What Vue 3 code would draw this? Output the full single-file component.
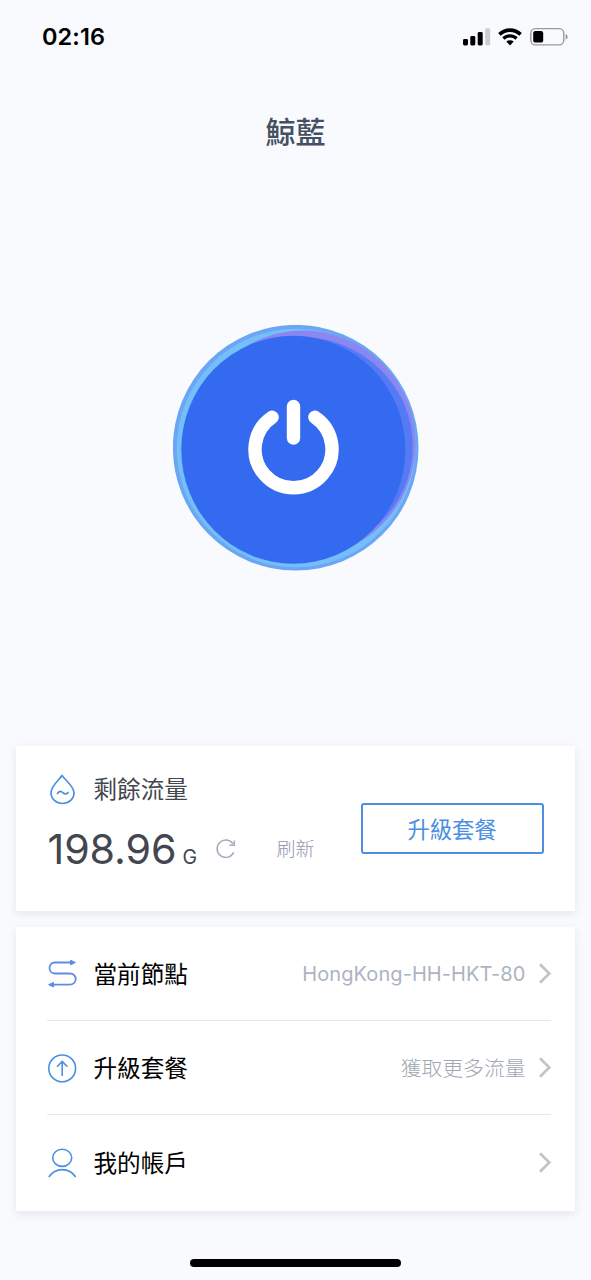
<script setup>
const rows = [
  { id: 'node', label: '當前節點', value: 'HongKong-HH-HKT-80', latin: true },
  { id: 'plan', label: '升級套餐', value: '獲取更多流量', latin: false },
  { id: 'account', label: '我的帳戶', value: '', latin: false }
]
</script>

<template>
  <main class="screen">
    <header class="status">
      <span class="time">02:16</span>
      <svg class="indicators" width="108" height="22" viewBox="0 0 108 22">
        <rect x="1" y="13" width="5" height="6.5" rx="1.4" />
        <rect x="8.3" y="10" width="5" height="9.5" rx="1.4" />
        <rect x="15.7" y="6" width="5" height="13.5" rx="1.4" />
        <rect x="23.2" y="2.3" width="5" height="17.2" rx="1.4" fill="#cccdd0" />
        <g fill="none" stroke="#000" stroke-width="3.6">
          <path d="M37.4 8.4a15.2 15.2 0 0 1 21.2 0" />
          <path d="M41.4 12.5a9.5 9.5 0 0 1 13.2 0" stroke-width="3.2" />
        </g>
        <path d="M44.3 15.6a5.5 5.5 0 0 1 7.4 0L48 19.4z" />
        <rect x="68.8" y="2.6" width="33" height="16.3" rx="4.6" fill="none" stroke="#98999c" stroke-width="1.4" />
        <rect x="71.2" y="5" width="10" height="11.6" rx="2.2" />
        <path d="M103.7 8v5.6c2.5-1 2.5-4.6 0-5.6z" fill="#8f9093" />
      </svg>
    </header>

    <h1 class="title">鯨藍</h1>

    <section class="power">
      <svg width="246" height="246" viewBox="0 0 246 246">
        <circle cx="122.7" cy="122.7" r="122.8" fill="#6ba5f4" />
        <ellipse cx="123" cy="123" rx="119.3" ry="119.3" fill="#74bff9" />
        <ellipse cx="130" cy="119" rx="112.3" ry="113.5" fill="#8b86f1" />
        <ellipse cx="127" cy="121" rx="112.8" ry="109" fill="#547af5" />
        <ellipse cx="120.3" cy="124.7" rx="112" ry="114" fill="#336af0" />
        <g fill="none" stroke="#fff" stroke-width="13.4" stroke-linecap="round">
          <path d="M99.1 92.3A38.5 38.5 0 1 0 141.9 92.3" />
          <path d="M120.5 81.5V113" />
        </g>
      </svg>
    </section>

    <section class="card usage">
      <div class="traffic">
        <div class="heading">
          <svg width="30" height="32" viewBox="0 0 30 32" fill="none" stroke="#4a8fe4" stroke-width="1.7" stroke-linecap="round" stroke-linejoin="round">
            <path d="M14 1.500C11.500 5.500 3 12 3 18.700C3 25 8.200 29.500 14.500 29.500S26 25 26 18.700C26 12 16.500 5.500 14 1.500Z" />
            <path d="M9.500 19.500C12 16 14 17.800 15.200 19C17 20.500 18.800 20 20 18.500" />
          </svg>
          <span>剩餘流量</span>
        </div>
        <div class="amount">
          <span class="number">198.96</span>
          <span class="unit">G</span>
          <svg class="refresh" width="22" height="22" viewBox="0 0 22 22" fill="none" stroke="#a3aabd" stroke-width="1.5">
            <path d="M18.700 14.400A8.700 8.700 0 1 1 18 5.800" />
            <path d="M19.300 2.500V7.300H14.500" />
          </svg>
          <span class="refresh-label">刷新</span>
        </div>
      </div>
      <button class="upgrade">升級套餐</button>
    </section>

    <nav class="card menu">
      <div v-for="row in rows" :key="row.id" class="row">
        <svg class="icon" width="30" height="32" viewBox="0 0 30 32" fill="none" stroke="#4a8fe4" stroke-width="1.6">
          <g v-if="row.id === 'node'" stroke="#5d8ce2" stroke-width="1.8">
            <path d="M23 4.500H7.700C0.800 4.500 0.800 15.500 7.700 15.500H22.500C30.800 15.500 30.800 26.700 22.500 26.700H6" />
            <path d="M23.500 2.200L28.400 4.500L23.500 6.800ZM6.500 24.400L1.600 26.700L6.500 29Z" fill="#5d8ce2" stroke-width="1" />
          </g>
          <g v-else-if="row.id === 'plan'">
            <circle cx="15.2" cy="16.4" r="13.4" />
            <path d="M15.200 23.900V9.600M10 14.700L15.200 9.400L20.400 14.700" />
          </g>
          <g v-else>
            <ellipse cx="15.2" cy="10.8" rx="9.5" ry="8.6" />
            <path d="M1.800 30C8.500 20.200 22 20.200 28.700 30" />
          </g>
        </svg>
        <span class="label">{{ row.label }}</span>
        <span class="value" :class="{ latin: row.latin }">{{ row.value }}</span>
        <svg class="chevron" width="14" height="22" viewBox="0 0 14 22" fill="none" stroke="#c3c4c6" stroke-width="2.7">
          <path d="M2 1.300L11.300 10.500L2 19.700" />
        </svg>
      </div>
    </nav>

    <footer class="home"><span></span></footer>
  </main>
</template>

<style>
body {
  margin: 0;
  background: #f9fafd;
}
</style>

<style scoped>
.screen {
  box-sizing: border-box;
  width: 591px;
  height: 1280px;
  padding: 0 16px;
  display: flex;
  flex-direction: column;
  background: #f9fafd;
  color: #000;
  font-family: Inter, "Noto Sans CJK TC", sans-serif;
  overflow: hidden;
}
.status {
  height: 74px;
  padding: 0 5px 0 26px;
  display: flex;
  align-items: center;
  justify-content: space-between;
}
.time {
  margin-bottom: 2px;
  font-size: 23.5px;
  font-weight: 600;
  letter-spacing: 0.1px;
}
.title {
  margin: 36px 0 0;
  height: 44px;
  line-height: 44px;
  text-align: center;
  font-size: 30px;
  font-weight: 500;
  color: #455063;
}
.power {
  height: 421px;
  margin-top: 170.5px;
  display: flex;
  justify-content: center;
}
.power svg,
.row svg,
.heading svg {
  flex: none;
}
.card {
  box-sizing: border-box;
  flex: none;
  background: #fff;
  border-radius: 1px;
  box-shadow: 0 3px 9px rgba(40, 60, 85, 0.1);
}
.usage {
  height: 165px;
  padding: 0 31.5px;
  display: flex;
  align-items: center;
  justify-content: space-between;
}
.traffic {
  height: 109px;
}
.heading {
  height: 32px;
  display: flex;
  align-items: center;
  gap: 16px;
  font-size: 23.6px;
  line-height: 30px;
  color: #43464e;
}
.heading span {
  margin-top: 1px;
}
.amount {
  display: flex;
  align-items: baseline;
  height: 50px;
  margin-top: 18px;
  line-height: 50px;
  color: #43464e;
}
.number {
  width: 128px;
  font-size: 41.2px;
  letter-spacing: -0.1px;
}
.unit {
  width: 17px;
  margin-left: 7px;
  font-size: 19.5px;
}
.refresh {
  align-self: center;
  margin: 0 0 0 15px;
}
.refresh-label {
  align-self: center;
  margin: 3px 0 0 40px;
  font-size: 19px;
  font-weight: 300;
  color: #8f98ae;
}
.upgrade {
  width: 183px;
  height: 51px;
  padding: 0;
  border: 2px solid #4b8fe2;
  border-radius: 3px;
  background: #fff;
  color: #4b8fe2;
  font-family: inherit;
  font-size: 22.3px;
}
.menu {
  height: 284px;
  margin-top: 16px;
  padding: 0 24px 0 31px;
}
.row {
  box-sizing: border-box;
  height: 94.3px;
  padding-top: 1px;
  display: flex;
  align-items: center;
  border-bottom: 1.5px solid #e6e8ea;
}
.row:last-child {
  border-bottom: 0;
}
.label {
  margin: 0 0 1px 16.5px;
  font-size: 23.6px;
}
.value {
  margin: 0 0 1px auto;
  font-size: 20.8px;
  font-weight: 300;
  color: #9fa7b4;
}
.latin {
  margin-bottom: 0;
  font-size: 20px;
  font-weight: 400;
  letter-spacing: 0.08px;
  color: #adb4bf;
}
.chevron {
  margin: 0 -1px 0 12.5px;
}
.home {
  margin-top: 48px;
  display: flex;
  justify-content: center;
}
.home span {
  width: 211px;
  height: 8px;
  border-radius: 4px;
  background: #000;
}
</style>
